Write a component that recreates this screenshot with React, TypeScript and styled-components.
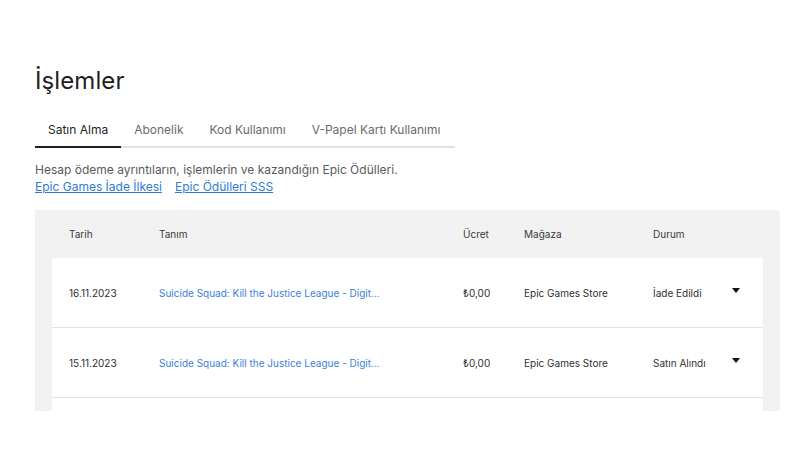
import React from "react";
import styled, { createGlobalStyle } from "styled-components";

const Global = createGlobalStyle`
  html, body { margin: 0; padding: 0; background: #ffffff; }
  body { font-family: Inter, "Noto Sans", sans-serif; color: #2a2a2a; }
  * { box-sizing: border-box; }
`;

const Page = styled.div`
  width: 800px;
  height: 450px;
  overflow: hidden;
  padding: 65px 20px 0 35px;
`;

const Title = styled.h1`
  margin: 0;
  font-size: 24px;
  font-weight: 400;
  line-height: 32px;
  color: #1f1f1f;
  letter-spacing: 0.1px;
`;

const Tabs = styled.div`
  display: flex;
  width: 420px;
  margin-top: 19px;
  border-bottom: 2px solid #e2e2e2;
`;

const Tab = styled.div<{ $active?: boolean }>`
  padding: 6px 13px 9px;
  font-size: 12px;
  color: ${(p) => (p.$active ? "#1f1f1f" : "#6a6a6a")};
  margin-bottom: -2px;
  border-bottom: 2px solid ${(p) => (p.$active ? "#1f1f1f" : "transparent")};
  white-space: nowrap;
`;

const Desc = styled.p`
  margin: 14px 0 0;
  font-size: 12px;
  line-height: 16px;
  color: #5a5a5a;
`;

const Links = styled.div`
  display: flex;
  gap: 13px;
  font-size: 12px;
  line-height: 17px;
`;

const Link = styled.a`
  color: #2f7bd6;
  text-decoration: underline;
`;

const Panel = styled.div`
  margin-top: 15px;
  width: 745px;
  height: 201px;
  overflow: hidden;
  background: #f2f2f2;
  border-radius: 0 4px 0 0;
  padding-left: 17px;
`;

const Grid = styled.div`
  display: grid;
  grid-template-columns: 90px 304px 61px 129px 79px 1fr;
  align-items: center;
`;

const HeadRow = styled(Grid)`
  height: 48px;
  padding-left: 17px;
  font-size: 10px;
  color: #3a3a3a;
  width: 711px;
`;

const Row = styled(Grid)`
  height: 70px;
  width: 711px;
  background: #ffffff;
  padding-left: 17px;
  font-size: 10px;
  color: #2f2f2f;
  border-bottom: 1px solid #e4e4e4;
`;

const Cell = styled.div`
  white-space: nowrap;
  overflow: hidden;
`;

const LinkCell = styled(Cell)`
  color: #3d7fd6;
`;

const Caret = styled.div`
  width: 0;
  height: 0;
  border-left: 4px solid transparent;
  border-right: 4px solid transparent;
  border-top: 5px solid #111;
  margin-top: -5px;
`;

const rows = [
  { date: "16.11.2023", status: "İade Edildi" },
  { date: "15.11.2023", status: "Satın Alındı" },
];

export default function App() {
  return (
    <>
      <Global />
      <Page>
        <Title>İşlemler</Title>
        <Tabs>
          <Tab $active>Satın Alma</Tab>
          <Tab>Abonelik</Tab>
          <Tab>Kod Kullanımı</Tab>
          <Tab>V-Papel Kartı Kullanımı</Tab>
        </Tabs>
        <Desc>Hesap ödeme ayrıntıların, işlemlerin ve kazandığın Epic Ödülleri.</Desc>
        <Links>
          <Link>Epic Games İade İlkesi</Link>
          <Link>Epic Ödülleri SSS</Link>
        </Links>
        <Panel>
          <HeadRow>
            <Cell>Tarih</Cell>
            <Cell>Tanım</Cell>
            <Cell>Ücret</Cell>
            <Cell>Mağaza</Cell>
            <Cell>Durum</Cell>
            <Cell />
          </HeadRow>
          {rows.map((r) => (
            <Row key={r.date}>
              <Cell>{r.date}</Cell>
              <LinkCell>Suicide Squad: Kill the Justice League - Digit...</LinkCell>
              <Cell>₺0,00</Cell>
              <Cell>Epic Games Store</Cell>
              <Cell>{r.status}</Cell>
              <Caret />
            </Row>
          ))}
          <Row />
        </Panel>
      </Page>
    </>
  );
}
